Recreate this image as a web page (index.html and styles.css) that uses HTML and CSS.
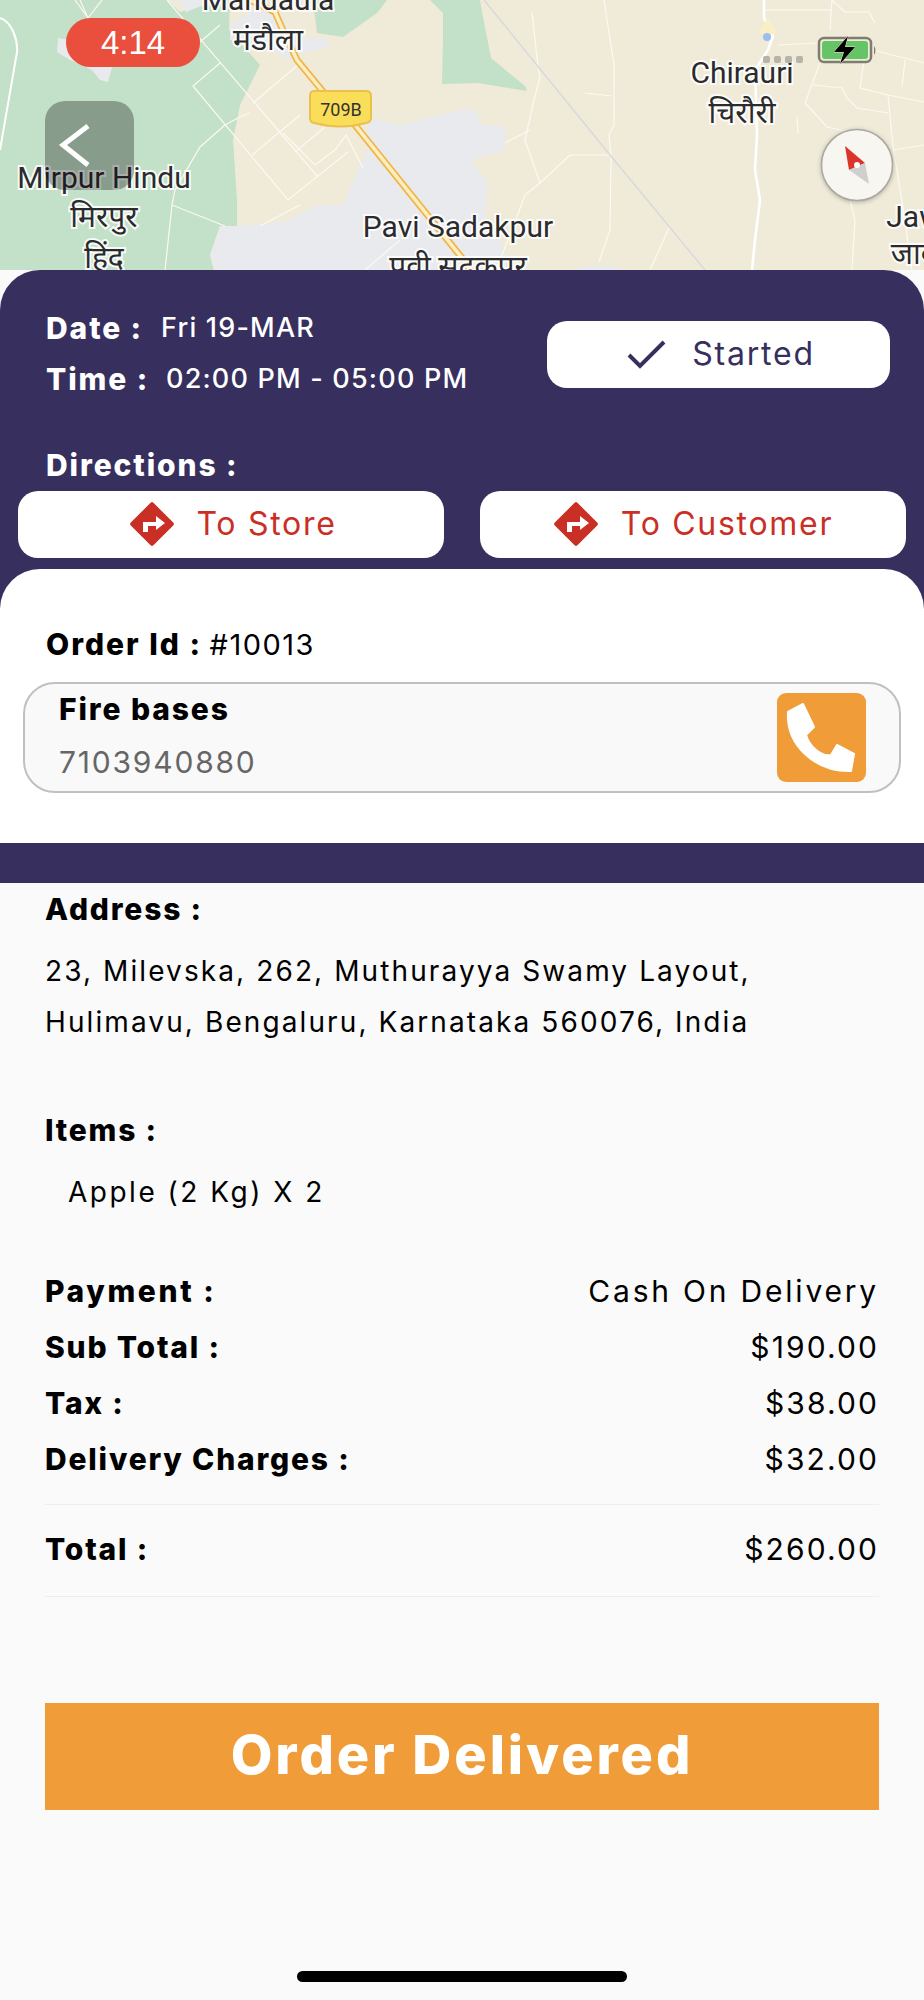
FILE: index.html
```html
<!DOCTYPE html>
<html lang="en">
<head>
<meta charset="utf-8">
<title>Order</title>
<link rel="stylesheet" href="styles.css">
</head>
<body>
<div class="map">
  <svg class="map-art" viewBox="0 0 924 270" width="924" height="270">
    <rect class="land" width="924" height="270"/>
    <path class="park" d="M0 0H167L180 12 217 0H230L229 30 260 65 240 105 233 140 237 200 237 226 220 226 210 255 214 270H0Z"/>
    <path class="park" d="M313 0H387L377 13 343 37 317 33Z"/>
    <path class="park" d="M430 0H480L482 12 491 58 525 86 527 91 478 83 442 84 443 40 443 13Z"/>
    <path class="urban" d="M180 0H217L186 12ZM230 25 253 10 280 15 293 38 327 38 327 48 300 53 290 60 262 45 230 40ZM58 38 57 52 70 60 92 70 100 80 108 82 113 64 90 62 70 40Z"/>
    <path class="urban" d="M220 226 238 226 285 222 318 205 343 205 367 150 367 117 400 125 440 115 462 110 475 110 482 125 506 127 504 150 472 160 473 163 488 183 486 205 486 225 500 240 510 270H214L210 255Z"/>
    <path class="urban" d="M578 270 582 266 618 266 618 270Z"/>
    <g class="lane">
      <path d="M167 0 318 177M220 63 193 86 288 200 348 152M253 103 298 65M252 155 300 115M295 152 325 127M283 133 315 165 335 150 346 135 363 168M225 125 240 117 250 113M225 125 200 147 175 190 172 205 225 226M172 205 165 270M260 226 300 205M365 270 400 240M80 0 88 18M102 0 88 18 75 0M200 42 220 25"/>
      <path d="M532 12 538 67 540 77 534 100 525 140 540 183 525 195 512 230 496 270M604 0 614 65 614 125 609 135 611 155 610 230 599 262M610 155 570 155 540 183M505 143 530 130M669 228 650 270M585 93 612 96"/>
      <path d="M764 10H832M832 0 830 30M832 0 845 12H869L875 23M820 63 805 103 827 127 850 132M813 85 842 88 847 98 857 108 888 113M873 50 924 63M865 53 860 88 888 95 924 102M905 60 902 87M888 95 893 147 903 207 912 270M893 150 924 145M778 45 818 43M797 117 798 133M850 200 855 220 852 270"/>
    </g>
    <path class="lane-main" d="M764 0V18L773 36 768 50 755 70 756 100 757 135 755 170 760 200 755 240 752 270"/>
    <path class="rail" d="M484 0 610 155 705 270"/>
    <path class="lane-edge" d="M0 18C12 22 18 40 17 52L0 150"/>
    <path class="road-out" d="M250 0 275 12 285 35 297 60 330 100 355 125 462 258 478 280"/>
    <path class="road-in" d="M250 0 275 12 285 35 297 60 330 100 355 125 462 258 478 280"/>
    <path class="spot" d="M762 26 768 18 778 34H758Z"/>
    <circle class="pond" cx="767" cy="37" r="4"/>
    <path class="shield" d="M314 91H366Q371 91 371 96V118Q371 122 366 123 341 130 314 123 310 122 310 118V96Q310 91 314 91Z"/>
    <text class="shield-text" x="341" y="116">709B</text>
    <g class="label">
      <text x="268" y="10">Mandaula</text>
      <text x="268" y="50">मंडौला</text>
      <text x="104" y="188">Mirpur Hindu</text>
      <text x="104" y="227">मिरपुर</text>
      <text x="104" y="268">हिंद</text>
      <text x="458" y="237">Pavi Sadakpur</text>
      <text x="458" y="277">पवी सदकपुर</text>
      <text x="742" y="83">Chirauri</text>
      <text x="742" y="123">चिरौरी</text>
      <text x="914" y="227">Jaw</text>
      <text x="914" y="264">जाव</text>
    </g>
    <g class="dots">
      <rect x="763" y="56" width="7" height="7" rx="2"/>
      <rect x="774" y="56" width="7" height="7" rx="2"/>
      <rect x="785" y="56" width="7" height="7" rx="2"/>
      <rect x="796" y="56" width="7" height="7" rx="2"/>
    </g>
    <rect class="batt-frame" x="819" y="38" width="52" height="24" rx="5"/>
    <rect class="batt-fill" x="822" y="41" width="46" height="18" rx="3"/>
    <path class="batt-nub" d="M874 46Q877 50 874 55Z"/>
    <path class="batt-bolt" d="M848 36 834 52H844L840 64 855 47H845Z"/>
    <circle class="compass" cx="857" cy="165" r="35.5"/>
    <path class="needle-red" d="M845 146 865 163 849 170Z"/>
    <path class="needle-grey" d="M865 163 869 184 849 170Z"/>
    <circle class="needle-hub" cx="857" cy="165" r="3"/>
  </svg>
  <div class="timer">4:14</div>
  <button class="back" type="button">
    <svg viewBox="0 0 89 89" width="89" height="89"><path class="back-chev" d="M43 25 18 44 43 64"/></svg>
  </button>
</div>

<section class="sheet">
  <div class="head">
    <div class="head-row">
      <div class="when">
        <div class="when-row"><span class="h-label">Date :</span><span class="h-value date">Fri 19-MAR</span></div>
        <div class="when-row"><span class="h-label">Time :</span><span class="h-value time">02:00 PM - 05:00 PM</span></div>
      </div>
      <button class="status" type="button">
        <svg viewBox="0 0 40 30" width="40" height="30"><path class="check" d="M2 16 13 27 37 3"/></svg>
        <span>Started</span>
      </button>
    </div>
    <div class="h-label directions">Directions :</div>
    <div class="dir-row">
      <button class="dir dir-store" type="button">
        <svg viewBox="0 0 46 46" width="46" height="46"><rect class="dir-mark" x="7" y="7" width="32" height="32" rx="2" transform="rotate(45 23 23)"/><path class="dir-arrow" d="M14 31V21H27V15L36 22 27 29V25H19V31Z"/></svg>
        <span>To Store</span>
      </button>
      <button class="dir" type="button">
        <svg viewBox="0 0 46 46" width="46" height="46"><rect class="dir-mark" x="7" y="7" width="32" height="32" rx="2" transform="rotate(45 23 23)"/><path class="dir-arrow" d="M14 31V21H27V15L36 22 27 29V25H19V31Z"/></svg>
        <span>To Customer</span>
      </button>
    </div>
  </div>
  <div class="card">
    <div class="order"><b>Order Id :</b> <span>#10013</span></div>
    <div class="contact">
      <div class="contact-text">
        <div class="contact-name">Fire bases</div>
        <div class="contact-phone">7103940880</div>
      </div>
      <button class="call" type="button">
        <svg viewBox="0 0 89 89" width="89" height="89"><path class="call-glyph" d="M11 19 26 11 37 34 29 42C32 52 43 64 54 62L60 52 77 61 74 78C38 79 9 52 11 19Z"/></svg>
      </button>
    </div>
  </div>
  <div class="band"></div>
</section>

<main class="details">
  <div class="d-label">Address :</div>
  <p class="address">23, Milevska, 262, Muthurayya Swamy Layout,<br>Hulimavu, Bengaluru, Karnataka 560076, India</p>
  <div class="d-label items">Items :</div>
  <p class="item">Apple (2 Kg) X 2</p>
  <div class="rows">
    <div class="row"><b class="d-label wide">Payment :</b><span class="pay">Cash On Delivery</span></div>
    <div class="row"><b class="d-label">Sub Total :</b><span>$190.00</span></div>
    <div class="row"><b class="d-label">Tax :</b><span>$38.00</span></div>
    <div class="row"><b class="d-label">Delivery Charges :</b><span>$32.00</span></div>
  </div>
  <div class="total"><div class="row"><b class="d-label">Total :</b><span>$260.00</span></div></div>
  <button class="deliver" type="button">Order Delivered</button>
</main>
<div class="home"></div>
</body>
</html>
```

FILE: styles.css
```css
* { box-sizing: border-box; }
html, body { margin: 0; padding: 0; }
body {
  width: 924px;
  height: 2000px;
  overflow: hidden;
  background: #fafafa;
  font-family: Inter, "Noto Sans", "Liberation Sans", sans-serif;
  color: #000;
}
button { font: inherit; border: 0; padding: 0; margin: 0; }
p { margin: 0; }
b { font-weight: 800; }

/* map */
.map { position: relative; height: 270px; overflow: hidden; }
.map-art { position: absolute; left: 0; top: 0; display: block; }
.land { fill: #f0ead8; }
.park { fill: #c3e0c8; }
.urban { fill: #e8eaed; }
.lane { fill: none; stroke: #fbf9f2; stroke-width: 1.2; }
.lane-main { fill: none; stroke: #fff; stroke-width: 2.6; }
.lane-edge { fill: none; stroke: #fff; stroke-width: 2; }
.rail { fill: none; stroke: #d6d9dc; stroke-width: 1.4; }
.road-out { fill: none; stroke: #f0b64a; stroke-width: 7; }
.road-in { fill: none; stroke: #fdeec0; stroke-width: 3.5; }
.spot { fill: #f8efc6; }
.pond { fill: #9dbcf2; }
.shield { fill: #fadd58; stroke: #e9c14c; stroke-width: 2; }
.shield-text { font-family: Roboto, sans-serif; font-size: 18px; fill: #333; text-anchor: middle; }
.label text {
  font-family: Roboto, "Noto Sans", "Noto Sans Devanagari", "Lohit Devanagari", sans-serif;
  font-size: 30px;
  fill: #2b2b2e;
  stroke: #fff;
  stroke-width: 4px;
  stroke-opacity: .85;
  paint-order: stroke;
  text-anchor: middle;
}
.dots rect { fill: #b6b3a8; }
.batt-frame { fill: none; stroke: #7d7d70; stroke-width: 2.5; }
.batt-fill { fill: #65c466; }
.batt-nub { fill: #7d7d70; }
.batt-bolt { fill: #000; stroke: #f0ead8; stroke-width: 1; paint-order: stroke; }
.compass { fill: #f8f6f1; stroke: #a9a8a3; stroke-width: 1.5; filter: drop-shadow(0 1px 2px rgba(0,0,0,.25)); }
.needle-red { fill: #dc332b; }
.needle-grey { fill: #cfcfcd; }
.needle-hub { fill: #fff; }

.timer {
  position: absolute;
  left: 66px;
  top: 18px;
  width: 134px;
  height: 49px;
  border-radius: 25px;
  background: #ea4e3d;
  color: #fff;
  font: 400 33px/49px "Liberation Sans", sans-serif;
  text-align: center;
}
.back {
  position: absolute;
  left: 45px;
  top: 101px;
  width: 89px;
  height: 89px;
  border-radius: 20px;
  background: rgba(0, 0, 0, .3);
}
.back svg { display: block; }
.back-chev { fill: none; stroke: #fff; stroke-width: 5; }

/* sheet */
.sheet { background: #372f5e; border-radius: 40px 40px 0 0; }
.head { padding: 33px 18px 11px; }
.head-row { display: flex; justify-content: space-between; padding-left: 28px; }
.when-row { display: flex; height: 51px; align-items: baseline; line-height: 51px; }
.h-label { color: #fff; font-weight: 800; font-size: 30px; line-height: 40px; letter-spacing: 1.9px; }
.when-row .h-label { line-height: 51px; width: 94px; white-space: nowrap; }
.when-row + .when-row .h-label { width: 99px; }
.h-value { color: #fff; font-size: 27px; letter-spacing: 1.2px; font-weight: 500; }
.date { margin-left: 21px; position: relative; top: -2px; }
.time { margin-left: 21px; position: relative; top: -2px; }
.status {
  margin: 18px 16px 0 0;
  width: 343px;
  height: 67px;
  border-radius: 20px;
  background: #fff;
  color: #372f5e;
  display: flex;
  align-items: center;
  justify-content: center;
  gap: 25px;
  font-size: 32px;
  letter-spacing: 1.8px;
  padding: 0 0 2px 5px;
}
.check { fill: none; stroke: #372f5e; stroke-width: 4; }
.directions { margin: 40px 0 6px 28px; }
.dir-row { display: flex; justify-content: space-between; }
.dir {
  width: 426px;
  height: 67px;
  border-radius: 20px;
  background: #fff;
  color: #c92f25;
  display: flex;
  align-items: center;
  justify-content: center;
  gap: 22px;
  font-size: 32px;
  letter-spacing: 1.7px;
  padding-bottom: 2px;
}
.dir-store { padding-left: 3px; }
.dir-mark { fill: #c92f25; }
.dir-arrow { fill: #fff; }

.card { background: #fff; border-radius: 40px 40px 0 0; padding: 55px 23px 50px; }
.order { height: 40px; font-size: 30px; line-height: 40px; padding-left: 23px; letter-spacing: 2px; }
.order span { font-size: 29px; letter-spacing: 1.5px; margin-left: -3px; }
.contact {
  margin-top: 18px;
  height: 111px;
  border: 2px solid #c0c0c0;
  border-radius: 32px;
  background: #f9f9f9;
  display: flex;
  justify-content: space-between;
  align-items: center;
  padding: 0 33px 0 34px;
}
.contact-text { align-self: flex-start; padding-top: 5px; }
.contact-name { font-weight: 800; font-size: 30px; line-height: 40px; letter-spacing: 1.9px; }
.contact-phone { margin-top: 9px; color: #666; font-size: 30px; line-height: 48px; letter-spacing: 1.8px; }
.call { width: 89px; height: 89px; border-radius: 9px; background: #f09c38; }
.call svg { display: block; }
.call-glyph { fill: #fff; stroke: #fff; stroke-width: 2; stroke-linejoin: round; }
.band { height: 40px; }

/* details */
.details { padding: 6px 45px 0; }
.d-label { font-weight: 800; font-size: 30px; line-height: 40px; letter-spacing: 1.8px; }
.address { margin-top: 17px; font-size: 28px; line-height: 51px; letter-spacing: 2.1px; white-space: nowrap; }
.items { margin-top: 62px; }
.item { margin-top: 17px; padding-left: 23px; font-size: 28px; line-height: 51px; letter-spacing: 2.5px; }
.rows { margin-top: 45px; padding-bottom: 17px; border-bottom: 1px solid #eee; }
.row { display: flex; justify-content: space-between; height: 56px; line-height: 56px; font-size: 30px; letter-spacing: 2.1px; }
.row .pay { letter-spacing: 2.8px; }
.row .d-label { line-height: 56px; }
.row .wide { letter-spacing: 2.6px; }
.total { padding: 16px 0 19px; border-bottom: 1px solid #eee; }
.deliver {
  display: block;
  margin-top: 106px;
  width: 834px;
  height: 107px;
  padding-bottom: 4px;
  background: #f09c38;
  color: #fff;
  font-weight: 800;
  font-size: 54px;
  letter-spacing: 2.9px;
}
.home { width: 330px; height: 11px; margin: 161px auto 0; border-radius: 6px; background: #000; }
```
